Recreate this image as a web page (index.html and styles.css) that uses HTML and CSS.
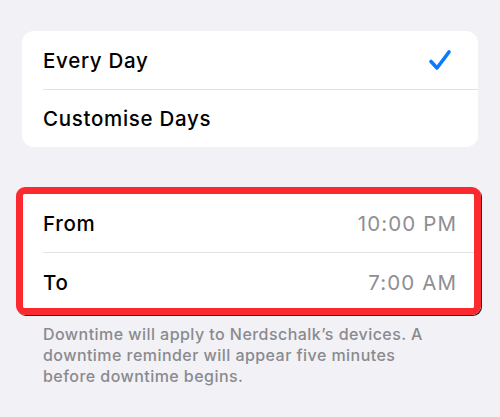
FILE: index.html
```html
<!DOCTYPE html>
<html lang="en">
<head>
  <meta charset="UTF-8">
  <meta name="viewport" content="width=device-width, initial-scale=1.0">
  <title>Downtime</title>
  <link rel="stylesheet" href="styles.css">
</head>
<body>
  <div class="page">
    <div class="group">
      <div class="row">
        <div class="label">Every Day</div>
        <svg class="check" width="24" height="22" viewBox="0 0 24 22">
          <path d="M3 12.5 L9 19 L21 3" fill="none" stroke="#0a7aff" stroke-width="3.6" stroke-linecap="round" stroke-linejoin="round"/>
        </svg>
      </div>
      <div class="row">
        <div class="label">Customise Days</div>
      </div>
    </div>

    <div class="highlight">
      <div class="group inner">
        <div class="row">
          <div class="label">From</div>
          <div class="value">10:00 PM</div>
        </div>
        <div class="row">
          <div class="label">To</div>
          <div class="value">7:00 AM</div>
        </div>
      </div>
    </div>

    <div class="footer">
      Downtime will apply to Nerdschalk’s devices. A downtime reminder will appear five minutes before downtime begins.
    </div>
  </div>
</body>
</html>
```

FILE: styles.css
```css
body {
  margin: 0;
  padding: 0;
  background: #f2f1f6;
  font-family: Inter, "Noto Sans", sans-serif;
  color: #000000;
}
.page {
  padding: 31px 22px 0 22px;
}
.group {
  background: #ffffff;
  border-radius: 12px;
}
.row {
  display: flex;
  align-items: center;
  justify-content: space-between;
  height: 58px;
  margin-left: 21px;
  padding-right: 26px;
  box-sizing: border-box;
}
.row + .row {
  border-top: 1px solid #e2e2e6;
}
.label {
  font-size: 20.5px;
  font-weight: 500;
  letter-spacing: 0.7px;
}
.check {
  display: block;
}
.highlight {
  margin: 40px 0 0 -6px;
  width: 465px;
  border: 7px solid #fc2a2f;
  border-radius: 9px;
  box-sizing: border-box;
  box-shadow: 1px 1px 0 #3a1a1a;
}
.inner {
  border-radius: 2px;
}
.inner .row {
  height: 58px;
  margin-left: 20px;
  padding-right: 17px;
}
.inner .row + .row {
  height: 56px;
  padding-top: 4px;
}
.value {
  font-size: 20.5px;
  color: #8e8e93;
  letter-spacing: 1.1px;
}
.footer {
  margin-top: 9px;
  padding: 0 33px 0 21px;
  font-size: 16px;
  font-weight: 500;
  line-height: 21px;
  letter-spacing: 0.45px;
  color: #8a8a8e;
}
```
